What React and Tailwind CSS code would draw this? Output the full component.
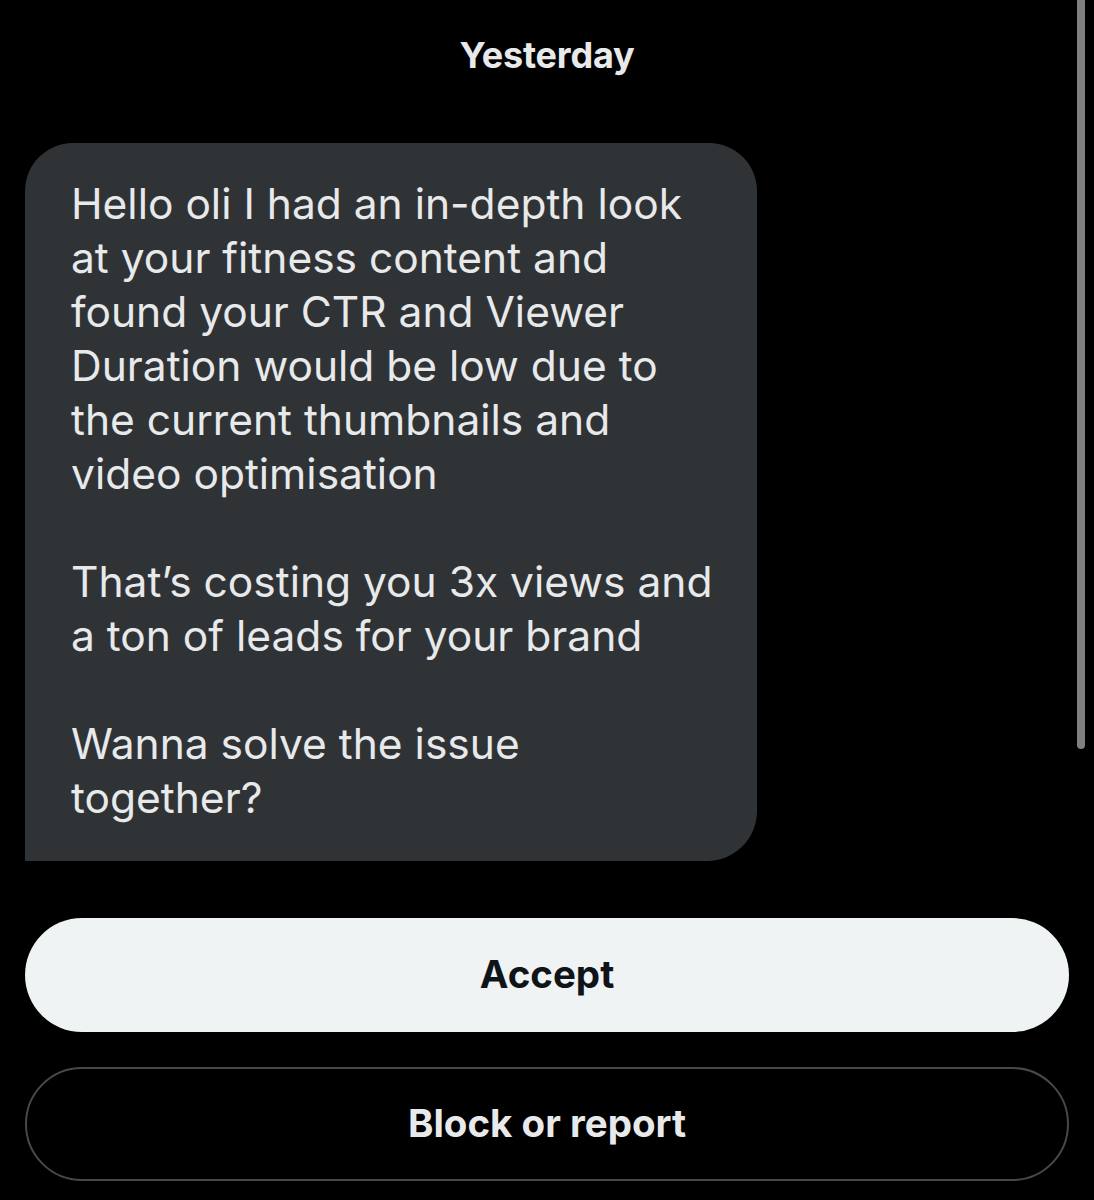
export default function App() {
  const para1 = [
    "Hello oli I had an in-depth look",
    "at your fitness content and",
    "found your CTR and Viewer",
    "Duration would be low due to",
    "the current thumbnails and",
    "video optimisation",
  ];
  const para2 = ["That\u2019s costing you 3x views and", "a ton of leads for your brand"];
  const para3 = ["Wanna solve the issue", "together?"];
  const font = { fontFamily: "Inter, 'Noto Sans', sans-serif" };
  return (
    <div className="relative w-[1094px] h-[1200px] bg-black overflow-hidden" style={font}>
      <div className="flex flex-col px-[25px]">
        <div className="h-[110px] flex items-center justify-center">
          <span className="text-[36px] font-bold text-[#e7e9ea] tracking-[-0.2px]">Yesterday</span>
        </div>
        <div className="mt-[33px] w-[732px] bg-[#303336] rounded-t-[48px] rounded-br-[50px] rounded-bl-none pl-[46px] pr-[10px] pt-[34px] pb-[36px] text-[#e7e9ea] text-[42.5px] leading-[54px] whitespace-nowrap">
          {para1.map((l) => (
            <div key={l}>{l}</div>
          ))}
          <div className="h-[54px]" />
          {para2.map((l) => (
            <div key={l}>{l}</div>
          ))}
          <div className="h-[54px]" />
          {para3.map((l) => (
            <div key={l}>{l}</div>
          ))}
        </div>
        <div className="mt-[57px] w-[1044px] h-[114px] rounded-full bg-[#eff3f4] flex items-center justify-center">
          <span className="text-[38.5px] font-bold text-[#0f1419]">Accept</span>
        </div>
        <div className="mt-[35px] w-[1044px] h-[114px] rounded-full border-2 border-[#45494c] flex items-center justify-center">
          <span className="text-[38.5px] font-bold text-[#e7e9ea]">Block or report</span>
        </div>
      </div>
      <div className="absolute right-[9px] top-0 w-[8px] h-[749px] bg-[#808080] rounded-b-full" />
    </div>
  );
}
